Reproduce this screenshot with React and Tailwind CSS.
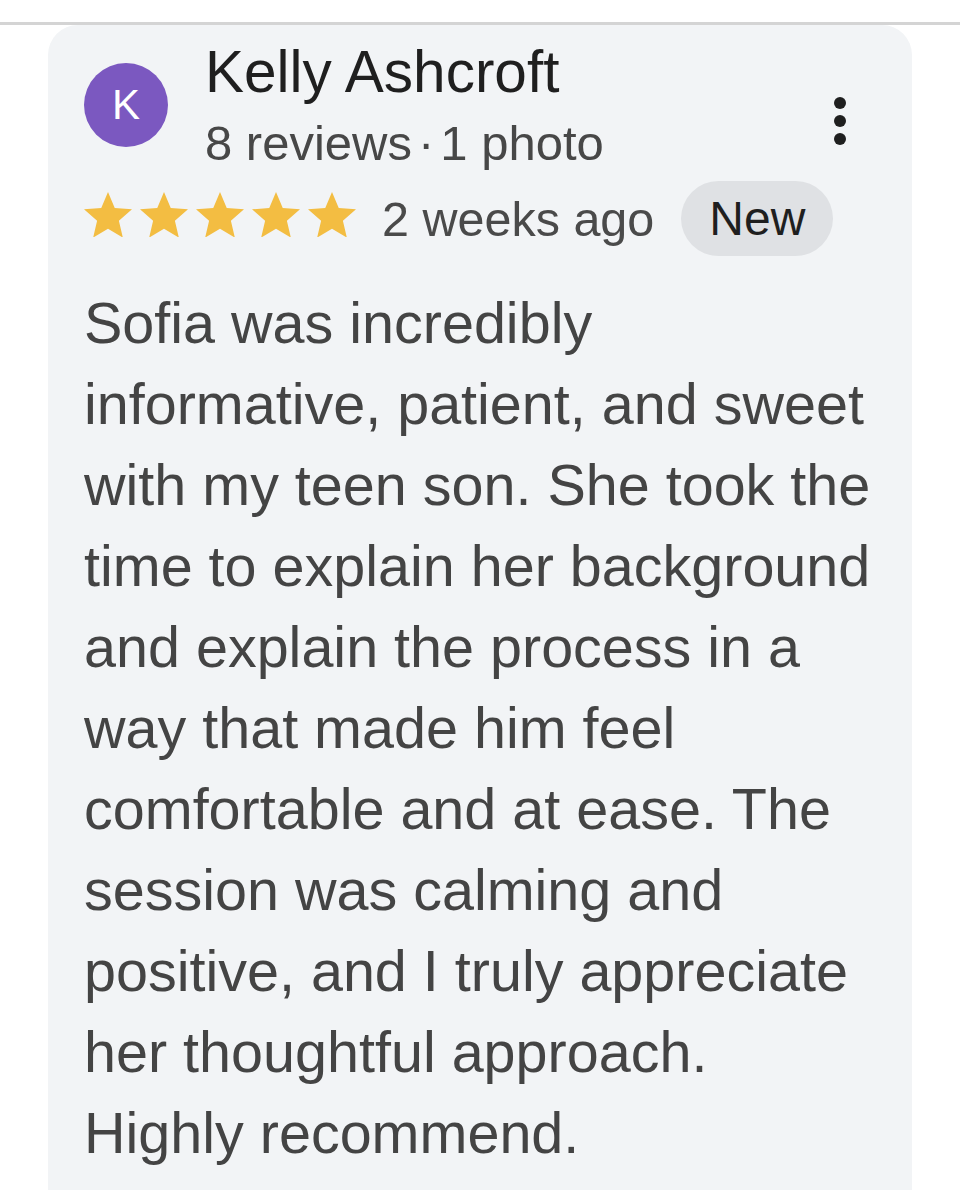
const BODY = [
  'Sofia was incredibly',
  'informative, patient, and sweet',
  'with my teen son. She took the',
  'time to explain her background',
  'and explain the process in a',
  'way that made him feel',
  'comfortable and at ease. The',
  'session was calming and',
  'positive, and I truly appreciate',
  'her thoughtful approach.',
  'Highly recommend.',
];

function Star() {
  return (
    <svg viewBox="2 2 20 19" width="48" height="45.6" aria-hidden="true">
      <path
        fill="#f3bd42"
        d="M12 17.27L18.18 21l-1.64-7.03L22 9.24l-7.19-.61L12 2 9.19 8.63 2 9.24l5.46 4.73L5.82 21z"
      />
    </svg>
  );
}

export default function App() {
  return (
    <div className="w-[960px] h-[1190px] overflow-hidden bg-white font-['Liberation_Sans',Arial,sans-serif]">
      <div className="h-[3px] mt-[22px] bg-[#d4d4d4]" />

      <article className="ml-[48px] w-[864px] min-h-[1200px] rounded-t-[30px] bg-[#f2f4f6] px-[36px]">
        <header className="flex items-start">
          <div className="mt-[38px] w-[84px] h-[84px] rounded-full bg-[#7b58c0] flex items-center justify-center text-white text-[42px] leading-none shrink-0">
            K
          </div>
          <div className="ml-[37px]">
            <div className="mt-[15px] text-[58.5px] leading-[64px] text-[#1f1f1f] whitespace-nowrap">Kelly Ashcroft</div>
            <div className="mt-[11px] text-[49px] leading-[56px] text-[#474747] whitespace-nowrap">
              8 reviews<span className="mx-[6px]">·</span>1 photo
            </div>
          </div>
          <button className="ml-auto mr-[30px] mt-[72px] flex flex-col gap-[6px]" aria-label="More options">
            <span className="block w-[12px] h-[12px] rounded-full bg-[#1f1f1f]" />
            <span className="block w-[12px] h-[12px] rounded-full bg-[#1f1f1f]" />
            <span className="block w-[12px] h-[12px] rounded-full bg-[#1f1f1f]" />
          </button>
        </header>

        <div className="mt-[10px] flex items-center">
          <div className="flex gap-[8px] mb-[8px]">
            {[0, 1, 2, 3, 4].map((i) => (
              <Star key={i} />
            ))}
          </div>
          <span className="ml-[26px] text-[48.5px] leading-[56px] text-[#4a4a4a] whitespace-nowrap">2 weeks ago</span>
          <span className="ml-[27px] h-[75px] px-[28px] rounded-full bg-[#dfe1e4] flex items-center text-[48px] leading-[56px] font-medium text-[#1f1f1f]">
            New
          </span>
        </div>

        <div className="mt-[27px] text-[57.5px] leading-[81px] text-[#444444]">
          {BODY.map((line) => (
            <div key={line} className="whitespace-nowrap">{line}</div>
          ))}
        </div>
      </article>
    </div>
  );
}
